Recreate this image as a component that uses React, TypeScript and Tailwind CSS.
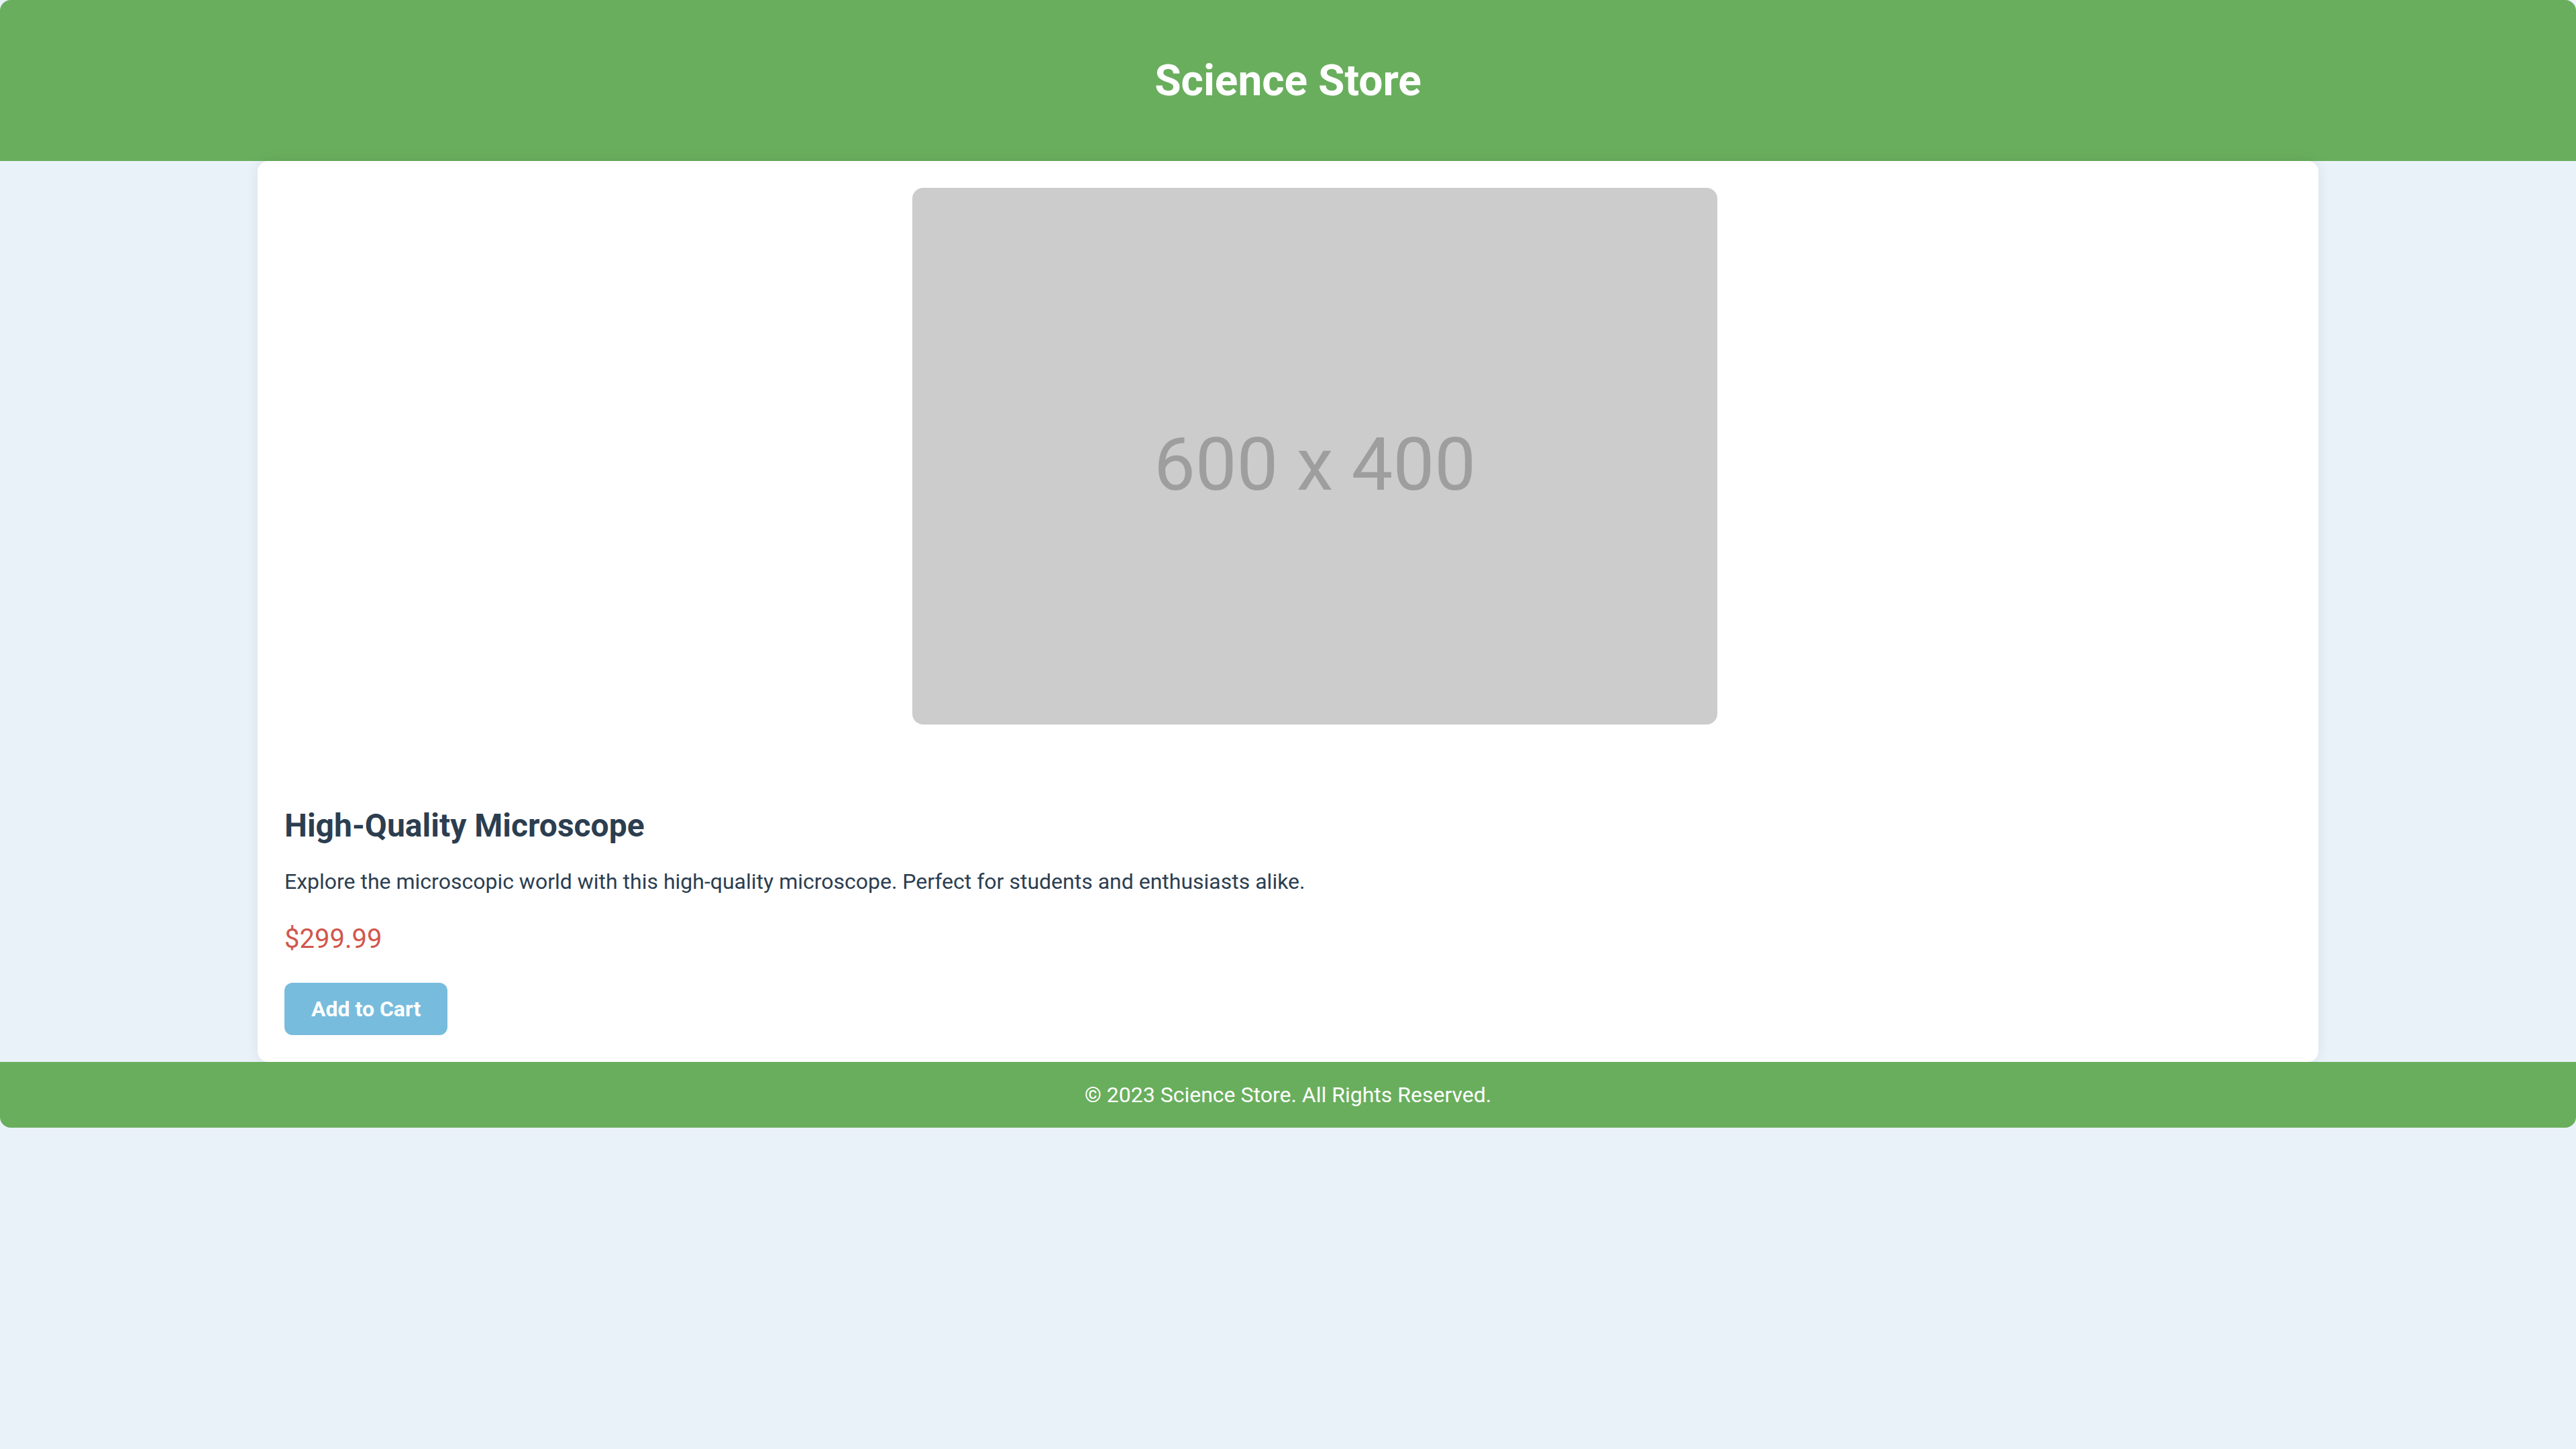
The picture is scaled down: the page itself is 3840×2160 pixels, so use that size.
export default function App() {
  return (
    <div className="min-h-screen bg-[#eaf2f9] font-['Roboto','Liberation_Sans',sans-serif]">
      <header className="flex h-[240px] items-center justify-center rounded-t-2xl bg-[#69ae5d]">
        <h1 className="text-[64px] font-bold leading-[75px] text-white">Science Store</h1>
      </header>

      <main className="mx-auto w-[80%] rounded-2xl bg-white p-10 shadow-[0_0_20px_rgba(0,0,0,0.08)]">
        <div className="flex justify-center pl-[80px]">
          <div className="flex h-[800px] w-[1200px] items-center justify-center rounded-2xl bg-[#cccccc] pt-6 text-[110px] text-[#9e9e9e]">
            600 x 400
          </div>
        </div>
        <h2 className="mt-[123px] text-[48px] font-bold leading-[56px] text-[#2c3e50]">High-Quality Microscope</h2>
        <p className="mt-[36px] text-[32px] leading-[38px] text-[#2c3e50]">
          Explore the microscopic world with this high-quality microscope. Perfect for students and enthusiasts alike.
        </p>
        <p className="mt-[44px] text-[40px] leading-[46px] text-[#d1574c]">$299.99</p>
        <button
          type="button"
          className="mt-[42px] h-[78px] rounded-xl bg-[#77bcdc] px-10 text-[32px] font-bold text-white"
        >
          Add to Cart
        </button>
      </main>

      <footer className="flex h-[98px] items-center justify-center rounded-b-2xl bg-[#69ae5d]">
        <p className="text-[32px] leading-[38px] text-white">© 2023 Science Store. All Rights Reserved.</p>
      </footer>
    </div>
  );
}
